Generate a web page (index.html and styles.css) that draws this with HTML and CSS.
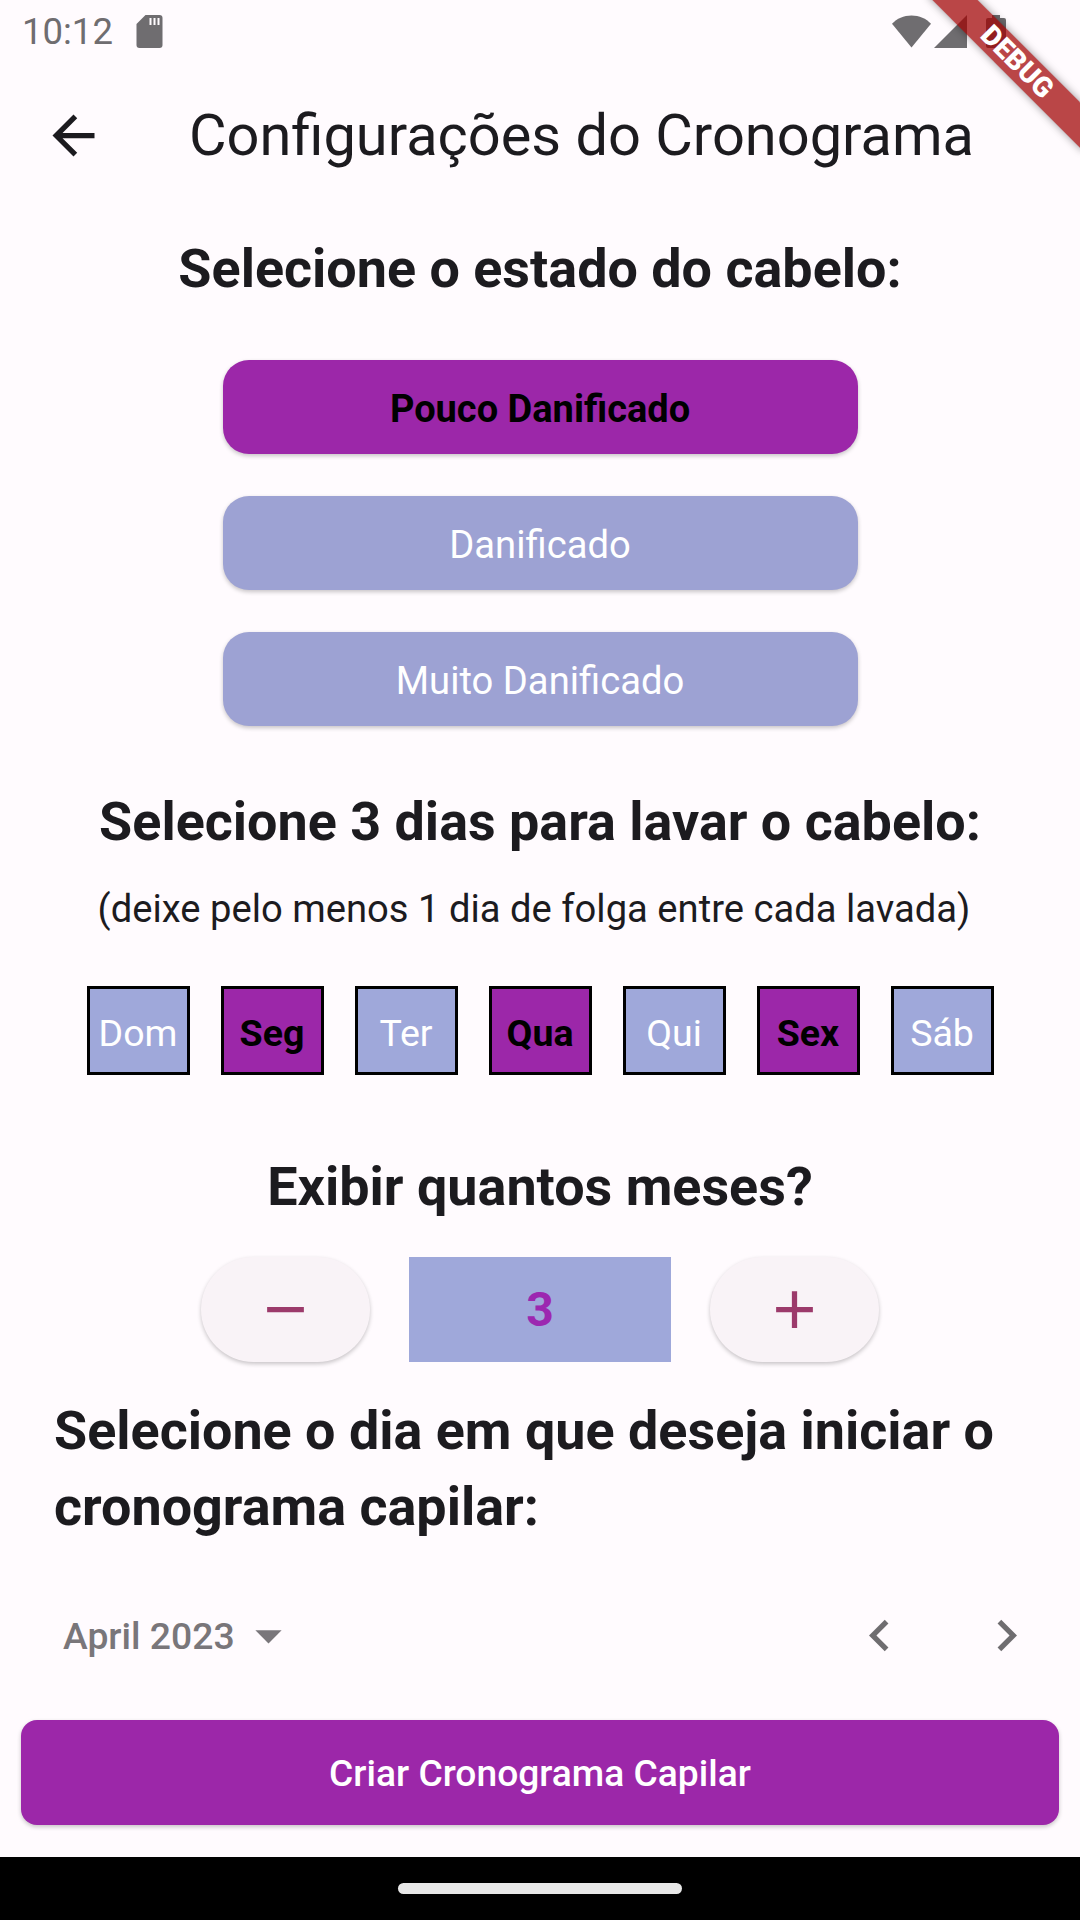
FILE: index.html
```html
<!DOCTYPE html>
<html lang="pt-BR">
<head>
    <meta charset="UTF-8">
    <meta name="viewport" content="width=device-width, initial-scale=1.0">
    <title>Configurações do Cronograma</title>
    <link rel="stylesheet" href="styles.css">
</head>
<body>
<div class="screen">
    <div class="status-bar">
        <div class="status-left">
            <span class="status-time">10:12</span>
            <svg class="sd-icon" viewBox="0 0 26 33"><path d="M9 0h14a3 3 0 0 1 3 3v27a3 3 0 0 1-3 3H3a3 3 0 0 1-3-3V9z" fill="#6f6d70"/><path d="M13 3h2v7h-2zM17 3h2v7h-2zM21 3h2v7h-2z" fill="#fffbfe"/></svg>
        </div>
        <div class="status-right">
            <svg class="wifi-icon" viewBox="0 0 40 33"><path d="M20 33 0 8.500C5 3 12 0 20 0s15 3 20 8.500z" fill="#6f6d70"/></svg>
            <svg class="signal-icon" viewBox="0 0 33 33"><path d="M33 0v33H0z" fill="#6f6d70"/></svg>
            <svg class="battery-icon" viewBox="0 0 20 33"><path d="M6 0h8v3h4a2 2 0 0 1 2 2v26a2 2 0 0 1-2 2H2a2 2 0 0 1-2-2V5a2 2 0 0 1 2-2h4z" fill="#6f6d70"/></svg>
        </div>
    </div>

    <div class="app-bar">
        <div class="back-button">
            <svg viewBox="0 0 24 24"><path d="M20 11H7.830l5.590-5.590L12 4l-8 8 8 8 1.410-1.410L7.830 13H20v-2z" fill="#1c1b1f"/></svg>
        </div>
        <h1 class="app-title">Configurações do Cronograma</h1>
    </div>

    <div class="content">
        <h2 class="section-title state-title">Selecione o estado do cabelo:</h2>
        <div class="state-list">
            <div class="state-button selected">Pouco Danificado</div>
            <div class="state-button">Danificado</div>
            <div class="state-button">Muito Danificado</div>
        </div>

        <h2 class="section-title days-title">Selecione 3 dias para lavar o cabelo:</h2>
        <p class="hint">(deixe pelo menos 1 dia de folga entre cada lavada)</p>
        <div class="day-row">
            <div class="day">Dom</div>
            <div class="day selected">Seg</div>
            <div class="day">Ter</div>
            <div class="day selected">Qua</div>
            <div class="day">Qui</div>
            <div class="day selected">Sex</div>
            <div class="day">Sáb</div>
        </div>

        <h2 class="section-title months-title">Exibir quantos meses?</h2>
        <div class="counter">
            <div class="counter-button">
                <svg viewBox="0 0 24 24"><path d="M19 13H5v-2h14v2z" fill="#9c3a6b"/></svg>
            </div>
            <div class="counter-value">3</div>
            <div class="counter-button">
                <svg viewBox="0 0 24 24"><path d="M19 13h-6v6h-2v-6H5v-2h6V5h2v6h6v2z" fill="#9c3a6b"/></svg>
            </div>
        </div>

        <h2 class="section-title start-title">Selecione o dia em que deseja iniciar o cronograma capilar:</h2>
        <div class="calendar-head">
            <div class="month-picker">
                <span>April 2023</span>
                <svg viewBox="0 0 24 24"><path d="M7 10l5 5 5-5z" fill="#79767a"/></svg>
            </div>
            <div class="month-nav">
                <svg viewBox="0 0 24 24"><path d="M15.410 7.410 14 6l-6 6 6 6 1.410-1.410L10.830 12z" fill="#6f6d70"/></svg>
                <svg viewBox="0 0 24 24"><path d="M10 6 8.590 7.410 13.170 12l-4.580 4.590L10 18l6-6z" fill="#6f6d70"/></svg>
            </div>
        </div>
    </div>

    <div class="create-wrap">
        <div class="create-button">Criar Cronograma Capilar</div>
    </div>

    <div class="nav-bar"><div class="nav-pill"></div></div>

    <div class="debug-banner">DEBUG</div>
</div>
</body>
</html>
```
FILE: styles.css
```css
* {
    margin: 0;
    padding: 0;
    box-sizing: border-box;
}

body {
    background: #fffbfe;
    font-family: Roboto, "Noto Sans", sans-serif;
    color: #1c1b1f;
}

.screen {
    position: relative;
    display: flex;
    flex-direction: column;
    width: 1080px;
    height: 1920px;
    overflow: hidden;
}

.status-bar {
    display: flex;
    justify-content: space-between;
    align-items: center;
    height: 66px;
    padding: 0 21px 3px 22px;
    flex-shrink: 0;
}

.status-left {
    display: flex;
    align-items: center;
    gap: 23px;
}

.status-time {
    font-size: 36.500px;
    color: #6f6d70;
}

.sd-icon {
    width: 27px;
    height: 33px;
}

.status-right {
    display: flex;
    align-items: center;
    margin-right: 53px;
}

.wifi-icon {
    width: 39px;
    height: 33px;
}

.signal-icon {
    width: 33px;
    height: 33px;
    margin-left: 3px;
}

.battery-icon {
    width: 20px;
    height: 33px;
    margin-left: 19px;
}

.app-bar {
    display: flex;
    align-items: center;
    height: 138px;
    flex-shrink: 0;
}

.back-button {
    display: flex;
    align-items: center;
    justify-content: center;
    width: 147px;
}

.back-button svg {
    width: 63px;
    height: 63px;
}

.app-title {
    margin-left: 42px;
    font-size: 57.750px;
    font-weight: 400;
    white-space: nowrap;
}

.content {
    flex: 1;
    display: flex;
    flex-direction: column;
}

.section-title {
    font-size: 53.900px;
    font-weight: 700;
    line-height: 76px;
    text-align: center;
}

.state-title {
    margin-top: 27px;
}

.state-list {
    display: flex;
    flex-direction: column;
    align-items: center;
    gap: 42px;
    margin-top: 53px;
}

.state-button {
    display: flex;
    align-items: center;
    justify-content: center;
    width: 635px;
    height: 94px;
    padding-top: 3px;
    border-radius: 26px;
    background: #9da2d3;
    color: #fff;
    font-size: 38.200px;
    box-shadow: 0 2px 4px rgba(0, 0, 0, 0.22);
}

.state-button.selected {
    background: #9c27a9;
    color: #000;
    font-size: 38px;
    font-weight: 700;
}

.days-title {
    margin-top: 58px;
}

.hint {
    margin-top: 25px;
    padding-right: 12px;
    font-size: 38.200px;
    line-height: 48px;
    text-align: center;
}

.day-row {
    display: flex;
    justify-content: center;
    gap: 31px;
    margin-top: 53px;
}

.day {
    display: flex;
    align-items: center;
    justify-content: center;
    width: 103px;
    height: 89px;
    padding-top: 4px;
    border: 3px solid #000;
    background: #9fa8da;
    color: #fff;
    font-size: 37.500px;
}

.day.selected {
    background: #9c27a9;
    color: #000;
    font-weight: 700;
}

.months-title {
    margin-top: 74px;
}

.counter {
    display: flex;
    justify-content: center;
    gap: 39px;
    margin-top: 32px;
}

.counter-button {
    display: flex;
    align-items: center;
    justify-content: center;
    width: 169px;
    height: 105px;
    border-radius: 53px;
    background: #f9f3f7;
    box-shadow: 0 2px 4px rgba(0, 0, 0, 0.22);
}

.counter-button svg {
    width: 63px;
    height: 63px;
}

.counter-value {
    display: flex;
    align-items: center;
    justify-content: center;
    width: 262px;
    height: 105px;
    background: #9fa8da;
    color: #9c27b0;
    font-size: 48px;
    font-weight: 700;
}

.start-title {
    margin-top: 31px;
    padding: 0 54px;
    text-align: left;
}

.calendar-head {
    display: flex;
    justify-content: space-between;
    align-items: center;
    height: 63px;
    margin-top: 59px;
    padding: 0 42px 0 63px;
}

.month-picker {
    display: flex;
    align-items: center;
    gap: 2px;
    font-size: 37.300px;
    font-weight: 500;
    color: #79767a;
}

.month-picker svg {
    width: 63px;
    height: 63px;
}

.month-nav {
    display: flex;
    gap: 64px;
}

.month-nav svg {
    width: 63px;
    height: 63px;
}

.create-wrap {
    padding: 0 21px 32px;
    flex-shrink: 0;
}

.create-button {
    display: flex;
    align-items: center;
    justify-content: center;
    height: 105px;
    border-radius: 16px;
    background: #9c27a9;
    color: #fff;
    font-size: 37.200px;
    font-weight: 500;
    box-shadow: 0 2px 4px rgba(0, 0, 0, 0.22);
}

.nav-bar {
    display: flex;
    align-items: center;
    justify-content: center;
    height: 63px;
    background: #000;
    flex-shrink: 0;
}

.nav-pill {
    width: 284px;
    height: 11px;
    border-radius: 6px;
    background: #e8e8e8;
}

.debug-banner {
    position: absolute;
    top: 46px;
    left: 907px;
    width: 220px;
    height: 32px;
    line-height: 32px;
    text-align: center;
    background: rgba(160, 0, 0, 0.72);
    color: #fff;
    font-size: 28px;
    font-weight: 900;
    transform: rotate(45deg);
    box-shadow: 0 0 8px rgba(0, 0, 0, 0.4);
}
```
